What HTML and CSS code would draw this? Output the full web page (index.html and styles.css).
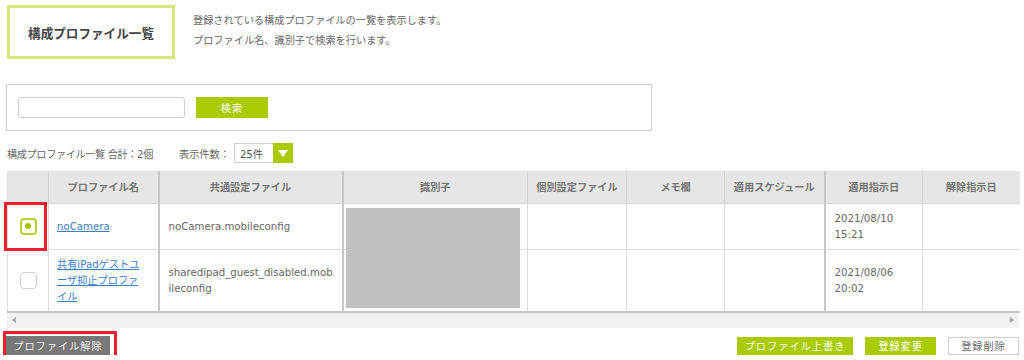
FILE: index.html
```html
<!DOCTYPE html>
<html lang="ja">
<head>
<meta charset="utf-8">
<title>構成プロファイル一覧</title>
<link rel="stylesheet" href="styles.css">
</head>
<body>
<div class="page">
  <div class="head">
    <div class="title-box">構成プロファイル一覧</div>
    <p class="desc">登録されている構成プロファイルの一覧を表示します。<br>プロファイル名、識別子で検索を行います。</p>
  </div>

  <div class="search">
    <input class="search-input" type="text">
    <button class="btn btn-green btn-search" type="button">検索</button>
  </div>

  <div class="count">
    <span class="total">構成プロファイル一覧 合計：2個</span>
    <span class="per">表示件数：</span>
    <div class="select"><span class="select-val">25件</span><span class="select-arrow"></span></div>
  </div>

  <div class="table-wrap">
    <table class="grid">
      <colgroup>
        <col class="c-check"><col class="c-name"><col class="c-common"><col class="c-id"><col class="c-indiv"><col class="c-memo"><col class="c-sched"><col class="c-apply"><col class="c-release">
      </colgroup>
      <thead>
        <tr>
          <th></th>
          <th>プロファイル名</th>
          <th class="thick">共通設定ファイル</th>
          <th class="thick">識別子</th>
          <th>個別設定ファイル</th>
          <th>メモ欄</th>
          <th>適用スケジュール</th>
          <th class="thick">適用指示日</th>
          <th>解除指示日</th>
        </tr>
      </thead>
      <tbody>
        <tr>
          <td class="check"><span class="cb on"></span></td>
          <td class="name"><a href="#">noCamera</a></td>
          <td class="thick common">noCamera.mobileconfig</td>
          <td class="thick"></td>
          <td></td>
          <td></td>
          <td></td>
          <td class="thick">2021/08/10 15:21</td>
          <td></td>
        </tr>
        <tr>
          <td class="check"><span class="cb"></span></td>
          <td class="name"><a href="#">共有iPadゲストユーザ抑止プロファイル</a></td>
          <td class="thick common">sharedipad_guest_disabled.mobileconfig</td>
          <td class="thick"></td>
          <td></td>
          <td></td>
          <td></td>
          <td class="thick">2021/08/06 20:02</td>
          <td></td>
        </tr>
      </tbody>
    </table>
    <div class="redact"></div>
    <div class="mark mark-check"></div>
  </div>

  <div class="scrollbar"><span class="arr arr-l"></span><span class="arr arr-r"></span></div>

  <div class="actions">
    <div class="mark-wrap">
      <button class="btn btn-gray" type="button">プロファイル解除</button>
      <div class="mark mark-btn"></div>
    </div>
    <div class="right-btns">
      <button class="btn btn-green w-over" type="button">プロファイル上書き</button>
      <button class="btn btn-green w-s" type="button">登録変更</button>
      <button class="btn btn-white w-s" type="button">登録削除</button>
    </div>
  </div>
</div>
</body>
</html>
```

FILE: styles.css
```css
* { box-sizing: border-box; }
body {
  margin: 0;
  font-family: "DejaVu Sans", "Noto Sans CJK JP", sans-serif;
  font-size: 10.2px;
  color: #666;
  background: #fff;
}
.page { width: 1024px; }

.head {
  display: flex;
  padding: 5px 0 0 7px;
  height: 59px;
}
.title-box {
  width: 168px;
  height: 54px;
  border: 3px solid #d5e67d;
  display: flex;
  align-items: center;
  justify-content: center;
  font-family: "Noto Sans CJK JP", sans-serif;
  font-weight: bold;
  font-size: 12.6px;
  color: #444;
}
.desc {
  margin: 6px 0 0 18px;
  line-height: 20px;
}

.search {
  margin: 25px 0 0 6px;
  width: 646px;
  height: 47px;
  border: 1px solid #cfcfcf;
  display: flex;
  align-items: center;
  gap: 11px;
  padding-left: 11px;
}
.search-input {
  width: 167px;
  height: 21px;
  border: 1px solid #cfcfcf;
  border-radius: 3px;
  background: #fff;
}
.btn {
  border: 0;
  padding: 0;
  font-family: "Noto Sans CJK JP", sans-serif;
  font-size: 10.2px;
  letter-spacing: 1px;
  display: flex;
  align-items: center;
  justify-content: center;
  cursor: pointer;
}
.btn-green { background: #a9cb00; color: #fff; }
.btn-search { width: 72px; height: 21px; }

.count {
  display: flex;
  align-items: center;
  margin: 12px 0 0 7px;
  height: 20px;
}
.total { letter-spacing: -0.4px; }
.per { margin-left: 26px; }
.select {
  margin-left: 4px;
  width: 59px;
  height: 20px;
  border: 1px solid #cfcfcf;
  display: flex;
  justify-content: space-between;
  align-items: center;
}
.select-val { padding-left: 5px; color: #555; }
.select-arrow {
  width: 20px;
  height: 20px;
  margin: -1px -1px -1px 0;
  background: #a9cb00;
  position: relative;
}
.select-arrow::after {
  content: "";
  position: absolute;
  left: 5px;
  top: 7px;
  border-left: 5px solid transparent;
  border-right: 5px solid transparent;
  border-top: 7px solid #fff;
}

.table-wrap {
  position: relative;
  margin: 8px 0 0 7px;
  width: 1012px;
}
.grid {
  width: 1012px;
  border-collapse: collapse;
  table-layout: fixed;
}
.c-check { width: 41px; }
.c-name { width: 110px; }
.c-common { width: 184px; }
.c-id { width: 185px; }
.c-indiv { width: 99px; }
.c-memo { width: 98px; }
.c-sched { width: 100px; }
.c-apply { width: 98px; }
.c-release { width: 97px; }

.grid th {
  height: 32px;
  background: #e6e6e6;
  font-family: "Noto Sans CJK JP", sans-serif;
  font-weight: bold;
  color: #777;
  border-left: 1px solid #d2d2d2;
  border-bottom: 1px solid #d6d6d6;
  padding: 0;
}
.grid td {
  padding: 7px 9px 6px;
  line-height: 16px;
  vertical-align: middle;
  border-left: 1px solid #dadada;
  border-bottom: 1px solid #dcdcdc;
}
.grid td.common { word-break: break-all; padding: 7px 8px 6px 9px; }
.grid tbody tr:last-child td { border-bottom: 2px solid #c6c6c6; }
.grid th.thick, .grid td.thick { border-left: 2px solid #c8c8c8; }
.grid th:first-child, .grid td:first-child { border-left: 1px solid #e0e0e0; }
.grid td.check { text-align: center; padding: 0; }
.grid td.name { padding: 7px 11px 6px 8px; }
.grid a { color: #3c80c6; text-decoration: underline; }

.cb {
  display: inline-block;
  vertical-align: middle;
  width: 17px;
  height: 17px;
  border: 1px solid #cfcfcf;
  border-radius: 4px;
  background: #fff;
  position: relative;
}
.cb.on { border: 2px solid #b7d330; }
.cb.on::after {
  content: "";
  position: absolute;
  left: 3.5px;
  top: 3.5px;
  width: 6px;
  height: 6px;
  border-radius: 50%;
  background: #a6c400;
}

.redact {
  position: absolute;
  left: 339px;
  top: 37px;
  width: 174px;
  height: 100px;
  background: #c0c0c0;
}
.mark {
  position: absolute;
  border: 3px solid #e8212e;
}
.mark-check {
  left: -3px;
  top: 31px;
  width: 43px;
  height: 49px;
}

.scrollbar {
  margin-left: 7px;
  width: 1012px;
  height: 15px;
  background: #f1f1f1;
  position: relative;
  display: flex;
  justify-content: space-between;
  align-items: center;
  padding: 0 5px;
}
.arr { width: 0; height: 0; border-top: 3px solid transparent; border-bottom: 3px solid transparent; }
.arr-l { border-right: 4px solid #a3a3a3; }
.arr-r { border-left: 4px solid #a3a3a3; }

.actions {
  display: flex;
  justify-content: space-between;
  align-items: flex-start;
  margin-top: 8px;
  padding: 0 5px 0 6px;
}
.mark-wrap { position: relative; }
.btn-gray {
  width: 104px;
  height: 19px;
  background: #787878;
  color: #eee;
}
.mark-btn { left: -3px; top: -5px; right: -7px; bottom: -3px; }
.right-btns {
  display: flex;
  gap: 12px;
  margin-top: 1px;
}
.w-over { width: 116px; height: 18px; }
.w-s { width: 71px; height: 18px; }
.btn-white { background: #fff; color: #666; border: 1px solid #cfcfcf; }
```
